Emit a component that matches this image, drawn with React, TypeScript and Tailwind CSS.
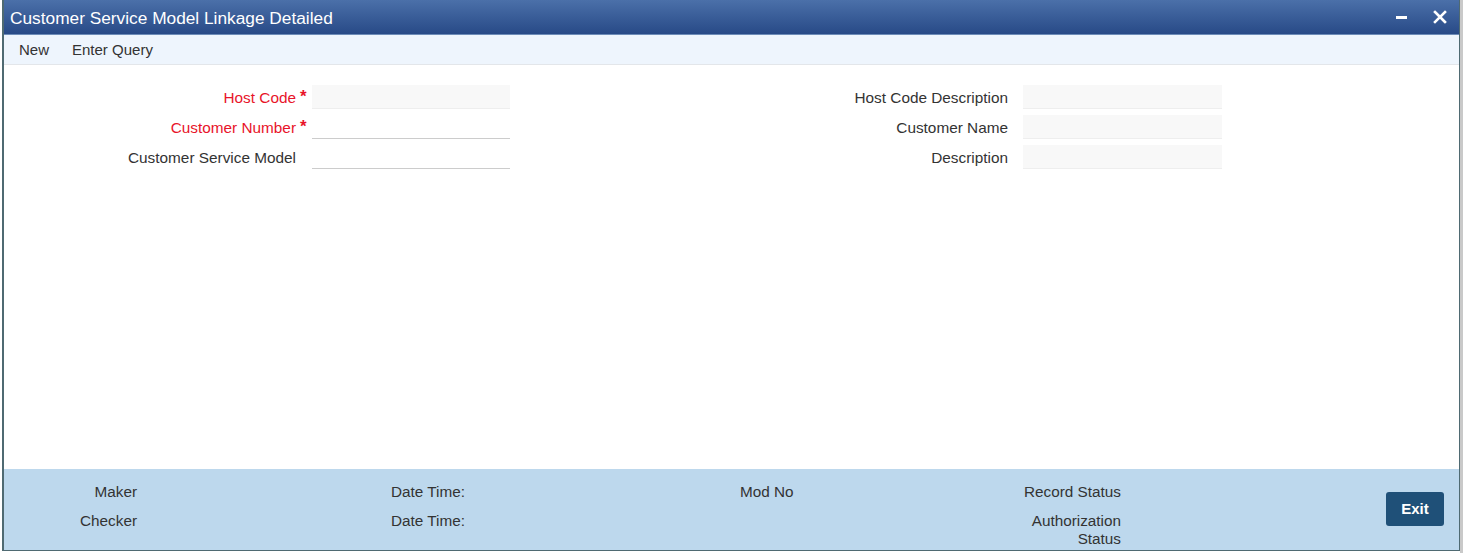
import React from "react";

const font = { fontFamily: '"Liberation Sans", Arial, sans-serif' };

function LeftRow({ label, required, inputClass }: { label: string; required?: boolean; inputClass: string }) {
  return (
    <div className="flex h-[24px] items-center">
      <div className={`w-[196px] text-right text-[15.35px] leading-[18px] pt-[2px] ${required ? "text-[#e8142a]" : "text-[#333333]"}`}>{label}</div>
      <div className="w-[16px] h-full flex justify-center relative">
        {required && <span className="absolute left-[4px] top-[5px] text-[#e8142a] text-[17px] leading-[14px] font-bold">*</span>}
      </div>
      <div className={`w-[198px] h-[24px] ${inputClass}`} />
    </div>
  );
}

function RightRow({ label }: { label: string }) {
  return (
    <div className="flex h-[24px] items-center">
      <div className="w-[200px] text-right text-[15.35px] leading-[18px] pt-[2px] text-[#333333]">{label}</div>
      <div className="w-[15px]" />
      <div className="w-[199px] h-[24px] bg-[#f8f8f8] border-b border-[#eeeeee]" />
    </div>
  );
}

export default function App() {
  return (
    <div className="w-[1463px] h-[553px] bg-white flex overflow-hidden" style={font}>
      <div className="w-[2px] h-full bg-white" />
      <div className="w-[1458px] h-[551px] flex flex-col border-l-2 border-r border-b border-[#4f6a72] bg-white">
        {/* header */}
        <div className="h-[35px] flex items-center bg-gradient-to-b from-[#4b70a9] to-[#284a87] border-b border-[#6d8cb8]">
          <div className="pl-[6px] pt-[1px] text-white text-[17.3px] leading-[20px]">Customer Service Model Linkage Detailed</div>
          <div className="flex-1" />
          <div className="w-[11px] h-[3px] bg-white mr-[26px] mt-[1px]" />
          <svg width="14" height="14" viewBox="0 0 14 14" className="mr-[12px]">
            <path d="M2 2 L12 12 M12 2 L2 12" stroke="white" strokeWidth="2.6" strokeLinecap="square" />
          </svg>
        </div>
        {/* toolbar */}
        <div className="h-[30px] flex items-center bg-[#eef5fd] border-b border-[#e3e6ea] text-[15px] text-[#333333]">
          <span className="ml-[15px] pt-[1px]">New</span>
          <span className="ml-[23px] pt-[1px]">Enter Query</span>
        </div>
        {/* form */}
        <div className="flex-1 flex pt-[20px]">
          <div className="ml-[96px] flex flex-col gap-[6px]">
            <LeftRow label="Host Code" required inputClass="bg-[#f8f8f8] border-b border-[#eeeeee]" />
            <LeftRow label="Customer Number" required inputClass="bg-white border-b border-[#cccccc]" />
            <LeftRow label="Customer Service Model" inputClass="bg-white border-b border-[#cccccc]" />
          </div>
          <div className="ml-[298px] flex flex-col gap-[6px]">
            <RightRow label="Host Code Description" />
            <RightRow label="Customer Name" />
            <RightRow label="Description" />
          </div>
        </div>
        {/* footer */}
        <div className="h-[81px] bg-[#bdd8ed] flex text-[15.3px] leading-[18px] text-[#333333]">
          <div className="w-[133px] pt-[14px] flex flex-col gap-[11px] text-right">
            <div>Maker</div>
            <div>Checker</div>
          </div>
          <div className="ml-[254px] w-[349px] pt-[14px] flex flex-col gap-[11px]">
            <div>Date Time:</div>
            <div>Date Time:</div>
          </div>
          <div className="w-[281px] pt-[14px]">
            <div>Mod No</div>
          </div>
          <div className="w-[100px] pt-[14px] flex flex-col gap-[11px] text-right">
            <div>Record Status</div>
            <div>Authorization Status</div>
          </div>
          <div className="flex-1 flex items-center justify-end pr-[15px]">
            <button className="w-[58px] h-[34px] rounded-[3px] bg-[#1f5078] text-white font-bold text-[15px] mt-[-2px]">Exit</button>
          </div>
        </div>
      </div>
      <div className="flex-1 h-full bg-[#c9c9c9]" />
    </div>
  );
}
